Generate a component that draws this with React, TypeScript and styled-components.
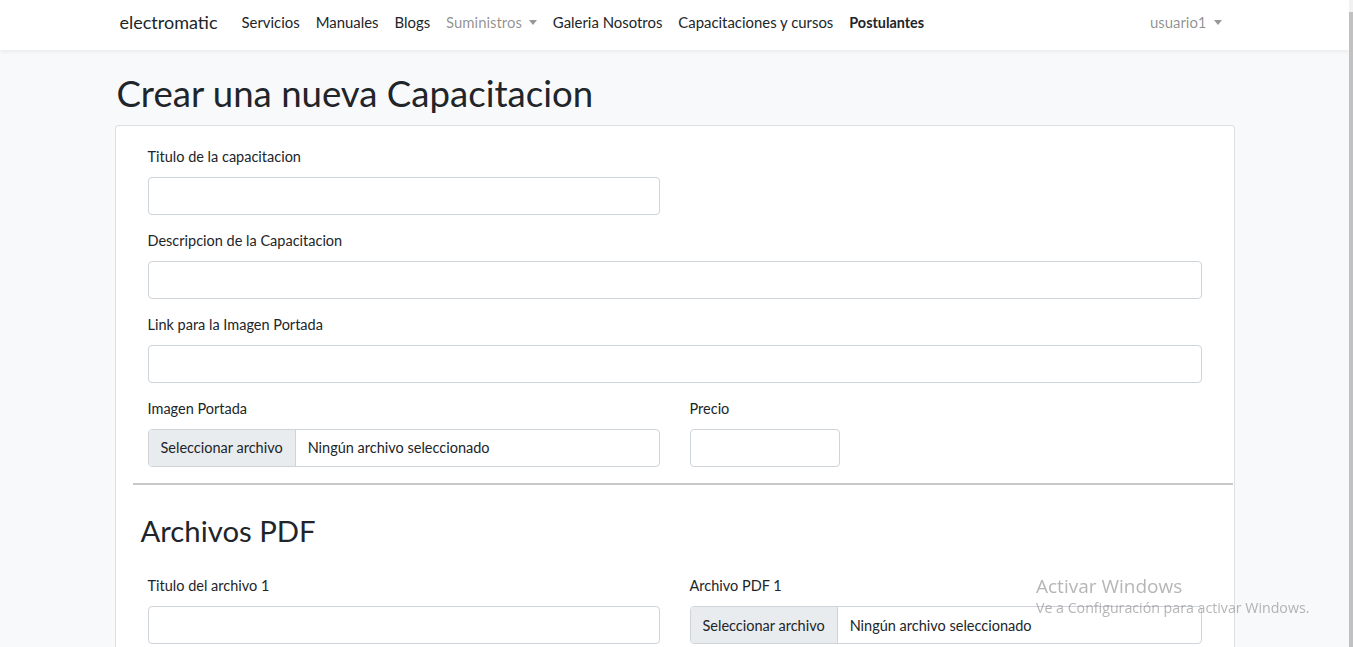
import React from "react";
import styled, { createGlobalStyle } from "styled-components";

const Global = createGlobalStyle`
  html, body { margin: 0; padding: 0; height: 100%; overflow: hidden; }
  body {
    font-family: Lato, "Noto Sans", sans-serif;
    background: #f8f9fa;
    color: #212529;
  }
  * { box-sizing: border-box; }
`;

const Shell = styled.div`
  display: flex;
  height: 100vh;
`;

const Page = styled.div`
  flex: 1;
  min-width: 0;
  overflow: hidden;
`;

const ScrollTrack = styled.div`
  width: 4px;
  flex: none;
  background: #f1f1f1;
  display: flex;
  flex-direction: column;
  padding-top: 12px;
`;

const ScrollThumb = styled.div`
  flex: 1;
  background: #c1c1c1;
`;

const NavBar = styled.nav`
  height: 50px;
  background: #fff;
  box-shadow: 0 2px 4px rgba(0, 0, 0, 0.06);
  position: relative;
  z-index: 1;
`;

const NavInner = styled.div`
  width: 1110px;
  margin: 0 auto;
  height: 100%;
  display: flex;
  align-items: center;
  padding-bottom: 6px;
`;

const Brand = styled.a`
  font-size: 18px;
  color: #212529;
  margin-right: 16px;
  text-decoration: none;
`;

const NavLinks = styled.div`
  display: flex;
  align-items: center;
  flex: 1;
`;

const NavLink = styled.a<{ $muted?: boolean; $bold?: boolean }>`
  padding: 0 8px;
  font-size: ${(p) => (p.$bold ? "14.4px" : "14.9px")};
  text-decoration: none;
  color: ${(p) => (p.$muted ? "rgba(0,0,0,0.45)" : "#212529")};
  font-weight: ${(p) => (p.$bold ? 700 : 400)};
  display: flex;
  align-items: center;
  white-space: nowrap;
`;

const Caret = styled.span`
  display: inline-block;
  margin-left: 7px;
  border-top: 5px solid currentColor;
  border-left: 4px solid transparent;
  border-right: 4px solid transparent;
  opacity: 0.9;
`;

const Main = styled.main`
  width: 1120px;
  margin: 0 auto;
`;

const Title = styled.h1`
  font-size: 36.6px;
  font-weight: 400;
  line-height: 1.2;
  margin: 22px 0 9px 2px;
`;

const Card = styled.section`
  background: #fff;
  border: 1px solid rgba(0, 0, 0, 0.125);
  border-radius: 4px;
  padding: 20px 0 40px;
`;

const Body = styled.div`
  padding: 0 32px;
`;

const Row = styled.div<{ $cols?: string }>`
  display: grid;
  grid-template-columns: ${(p) => p.$cols || "1fr"};
  column-gap: 30px;
`;

const Group = styled.div`
  margin-bottom: 15px;
`;

const Label = styled.label`
  display: block;
  font-size: 14.5px;
  line-height: 21px;
  margin-bottom: 10px;
`;

const Input = styled.input<{ $w?: string }>`
  display: block;
  width: ${(p) => p.$w || "100%"};
  height: 38px;
  border: 1px solid #ced4da;
  border-radius: 4px;
  background: #fff;
  padding: 6px 12px;
  font: inherit;
`;

const FileBox = styled.div`
  display: flex;
  height: 38px;
  border: 1px solid #ced4da;
  border-radius: 4px;
  overflow: hidden;
  font-size: 14.5px;
`;

const FileButton = styled.span`
  background: #e9ecef;
  border-right: 1px solid #ced4da;
  padding: 0 12px;
  display: flex;
  align-items: center;
  white-space: nowrap;
`;

const FileName = styled.span`
  padding: 0 12px;
  display: flex;
  align-items: center;
  white-space: nowrap;
`;

const Divider = styled.hr`
  border: 0;
  border-top: 2px solid #c8c8c8;
  margin: 1px 1px 28px 17px;
`;

const SubTitle = styled.h3`
  font-size: 29.3px;
  font-weight: 400;
  line-height: 1.2;
  margin: 0 0 27px 25px;
`;

const Watermark = styled.div`
  position: fixed;
  left: 1036px;
  top: 573px;
  color: rgba(120, 120, 120, 0.55);
  font-family: "Open Sans", "Noto Sans", sans-serif;
  pointer-events: none;
  z-index: 5;
`;

const WmTitle = styled.div`
  font-size: 19px;
  line-height: 26px;
`;

const WmText = styled.div`
  font-size: 14.2px;
  line-height: 18px;
`;

function Field({ label, w }: { label: string; w?: string }) {
  return (
    <Group>
      <Label>{label}</Label>
      <Input type="text" $w={w} />
    </Group>
  );
}

function FileField({ label }: { label: string }) {
  return (
    <Group>
      <Label>{label}</Label>
      <FileBox>
        <FileButton>Seleccionar archivo</FileButton>
        <FileName>Ningún archivo seleccionado</FileName>
      </FileBox>
    </Group>
  );
}

export default function App() {
  return (
    <>
      <Global />
      <Shell>
        <Page>
          <NavBar>
            <NavInner>
              <Brand>electromatic</Brand>
              <NavLinks>
                <NavLink>Servicios</NavLink>
                <NavLink>Manuales</NavLink>
                <NavLink>Blogs</NavLink>
                <NavLink $muted>
                  Suministros
                  <Caret />
                </NavLink>
                <NavLink>Galeria Nosotros</NavLink>
                <NavLink>Capacitaciones y cursos</NavLink>
                <NavLink $bold>Postulantes</NavLink>
              </NavLinks>
              <NavLink $muted>
                usuario1
                <Caret />
              </NavLink>
            </NavInner>
          </NavBar>
          <Main>
            <Title>Crear una nueva Capacitacion</Title>
            <Card>
              <Body>
                <Row $cols="1fr 1fr">
                  <Field label="Titulo de la capacitacion" />
                </Row>
                <Field label="Descripcion de la Capacitacion" />
                <Field label="Link para la Imagen Portada" />
                <Row $cols="1fr 1fr">
                  <FileField label="Imagen Portada" />
                  <Field label="Precio" w="150px" />
                </Row>
              </Body>
              <Divider />
              <SubTitle>Archivos PDF</SubTitle>
              <Body>
                <Row $cols="1fr 1fr">
                  <Field label="Titulo del archivo 1" />
                  <FileField label="Archivo PDF 1" />
                </Row>
              </Body>
            </Card>
          </Main>
        </Page>
        <ScrollTrack>
          <ScrollThumb />
        </ScrollTrack>
      </Shell>
      <Watermark>
        <WmTitle>Activar Windows</WmTitle>
        <WmText>Ve a Configuración para activar Windows.</WmText>
      </Watermark>
    </>
  );
}
